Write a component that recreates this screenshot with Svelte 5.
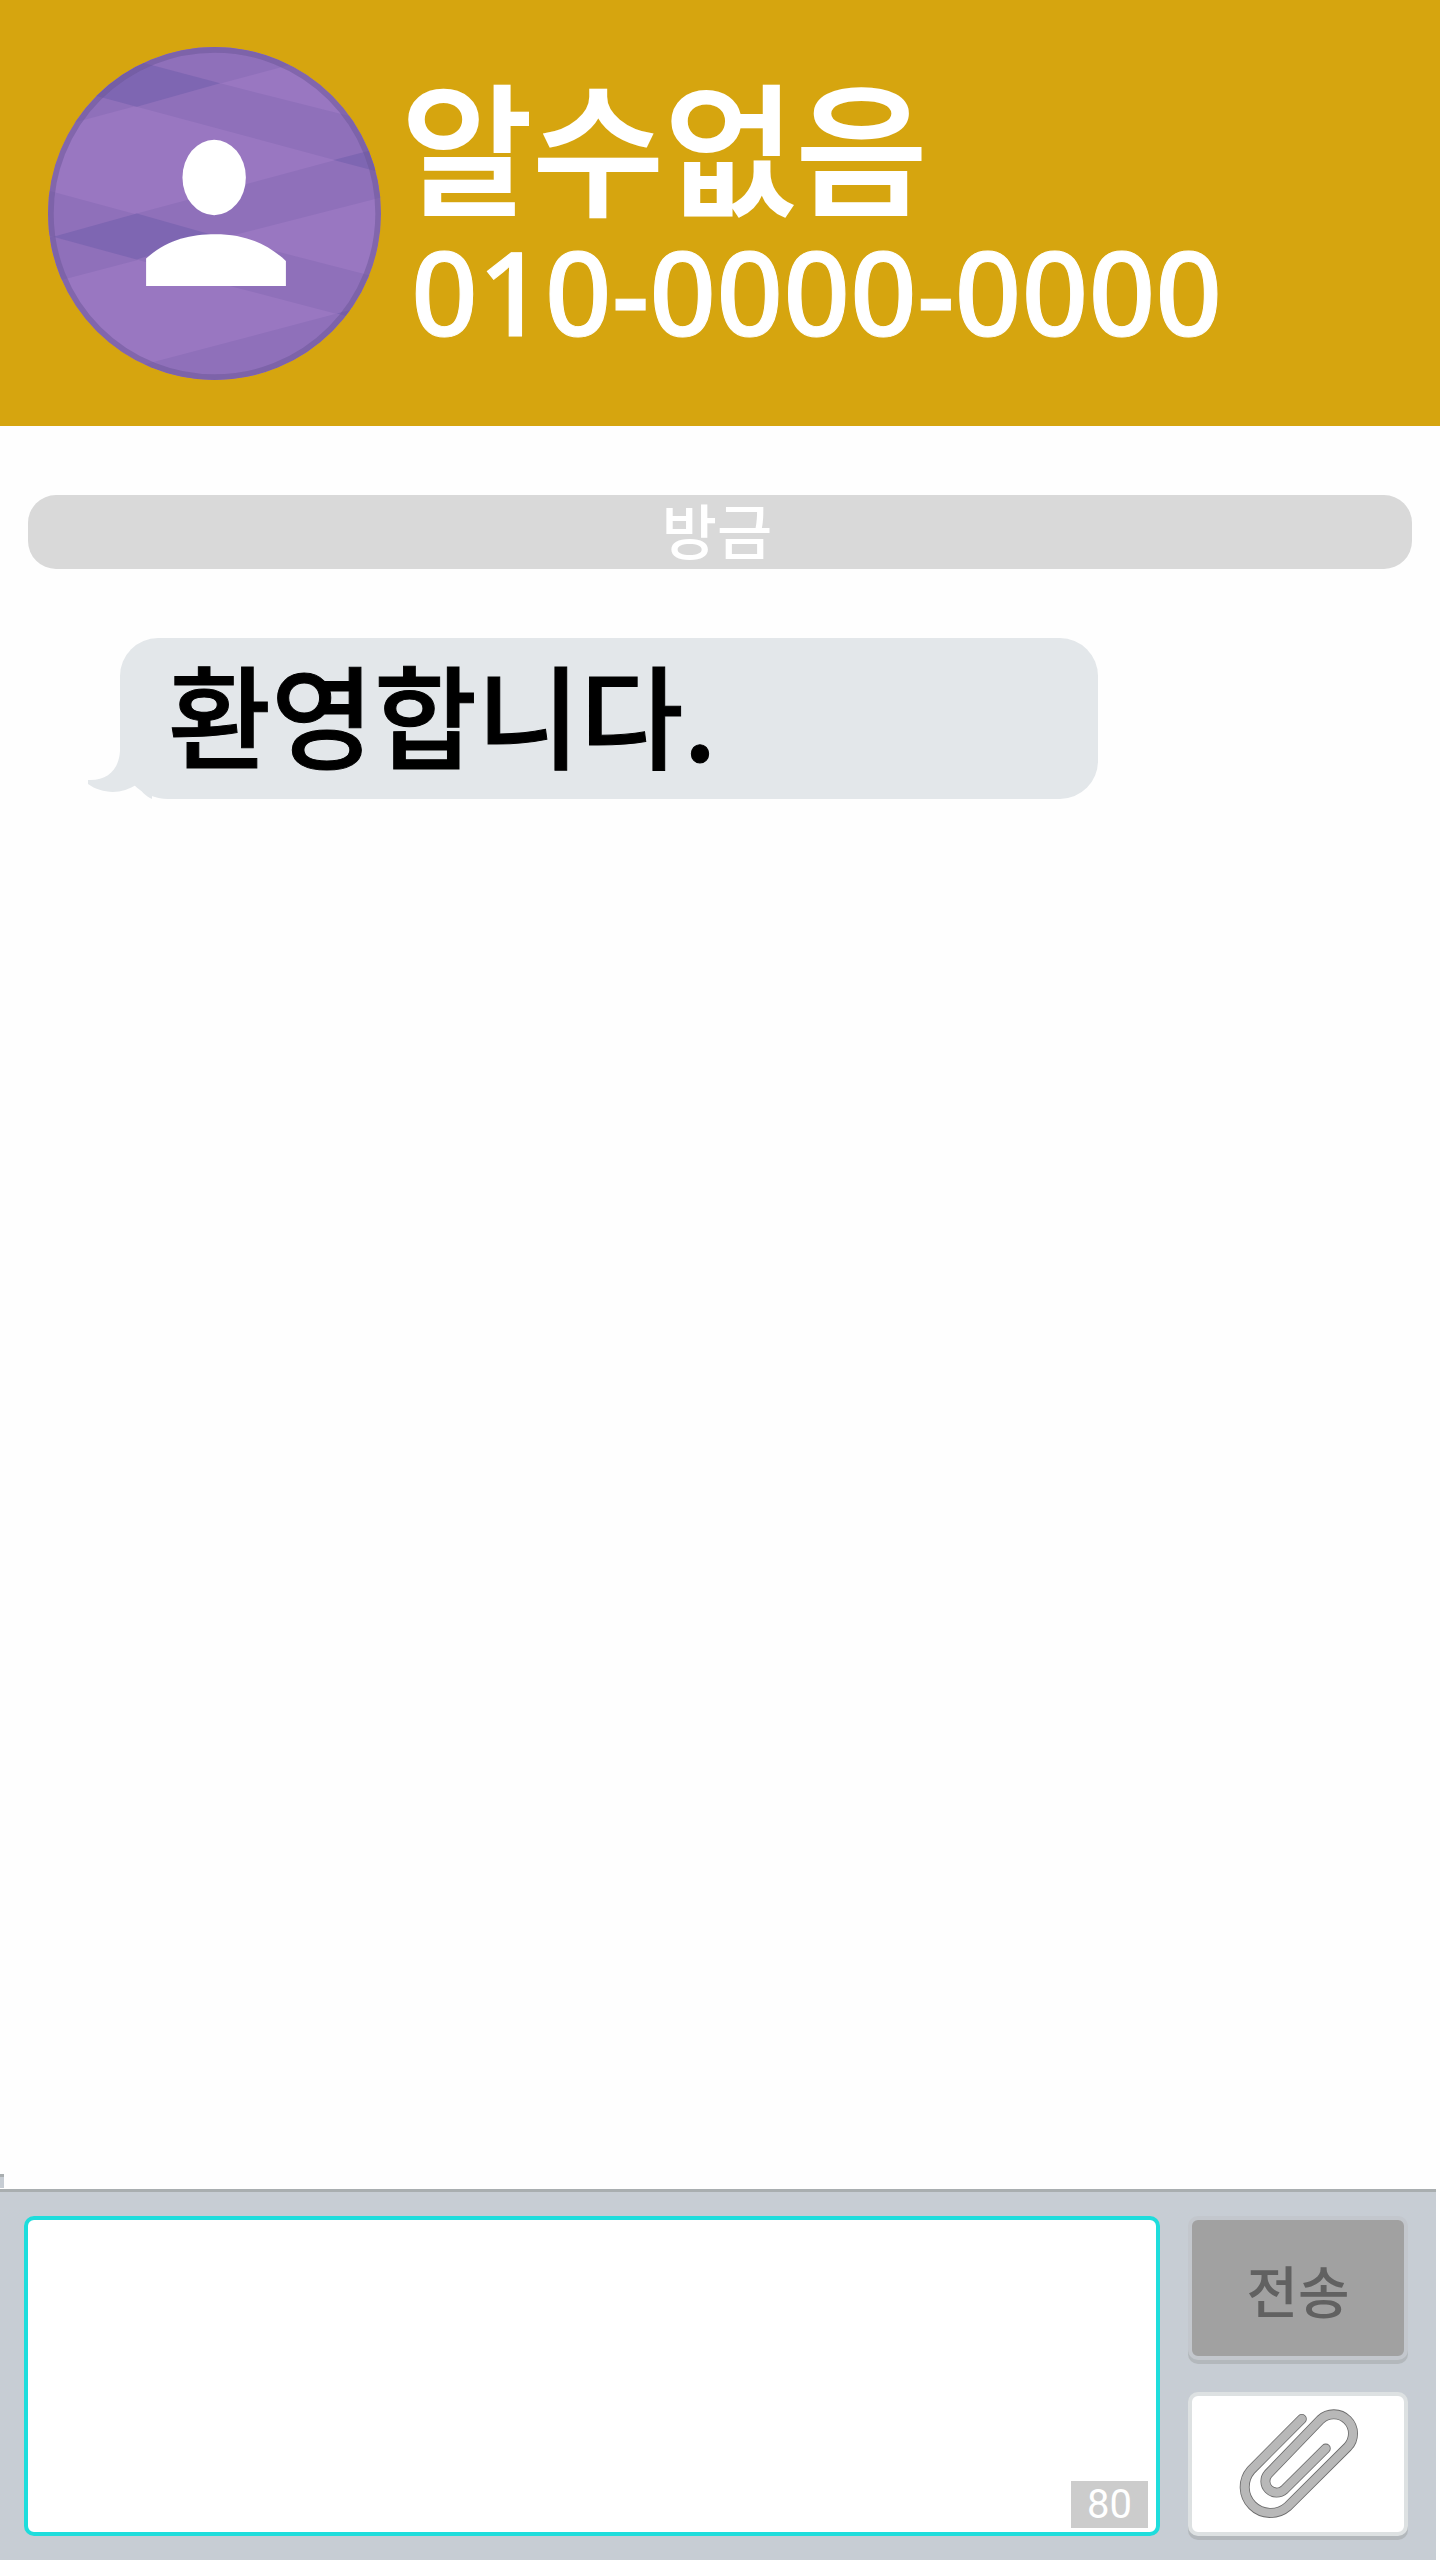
<script>
  let message = $state('');
  const limit = 80;
</script>

<main class="screen">
  <header class="contact">
    <svg class="avatar" viewBox="144 141 998 998" role="img" aria-label="프로필">
      <clipPath id="disc"><circle cx="643" cy="640" r="499" /></clipPath>
      <g clip-path="url(#disc)">
        <rect x="144" y="141" width="998" height="998" fill="#9977c1" />
        <g fill="#8f70ba">
          <path d="M144 388 L1142 122 L144 100Z" />
          <path d="M144 113 L660 250 L1142 372 V517 L410 320 L144 249Z" />
          <path d="M144 714 L410 640 L1142 443 V592 L720 700 L410 780 L144 850Z" />
          <path d="M144 571 L640 705 L1142 834 V976 L700 860 L410 778 L144 706Z" />
          <path d="M400 1101 L1010 940 L1142 905 V1139 H400Z" />
        </g>
        <g fill="#7e66b2">
          <path d="M144 113 L660 250 L410 320 L144 249Z" />
          <path d="M1000 480 L1142 443 V517Z" />
          <path d="M160 710 L410 640 L640 705 L410 778Z" />
          <path d="M1010 940 L1062 926 V953Z" />
        </g>
        <circle cx="643" cy="640" r="491" fill="none" stroke="#6b5597" stroke-opacity=".5" stroke-width="18" />
      </g>
      <ellipse cx="642" cy="532" rx="95" ry="113" fill="#fff" />
      <path d="M438 857 V775 C500 718 570 702 645 702 C735 702 800 730 857 782 V857Z" fill="#fff" />
    </svg>
    <div class="who">
      <h1>알수없음</h1>
      <p>010-0000-0000</p>
    </div>
  </header>

  <section class="thread">
    <div class="stamp">방금</div>
    <div class="bubble">
      <svg class="tail" viewBox="0 0 64 48" aria-hidden="true">
        <path d="M32 0 C31 18 20 30 0 29 V33 C14 43 34 44 49 33 C52 39 57 45 64 48 V0Z" />
      </svg>
      환영합니다.
    </div>
  </section>

  <form class="composer" onsubmit={(e) => e.preventDefault()}>
    <div class="field">
      <textarea aria-label="메시지" bind:value={message} maxlength={limit}></textarea>
      <span class="count">{limit - message.length}</span>
    </div>
    <div class="actions">
      <button class="send" type="submit">전송</button>
      <button class="attach" type="button" aria-label="파일 첨부">
        <svg viewBox="234 684 364 334" aria-hidden="true">
          <g fill="none" stroke-linecap="round" stroke-linejoin="round">
            <path stroke="#6c6c6c" stroke-width="30" d="M426 714 L273 868 A78 78 0 0 0 383 978 L564 798 A58 58 0 0 0 482 716 L325 879 A34 34 0 0 0 373 927 L498 803" />
            <path stroke="#b8b8b8" stroke-width="25" d="M426 714 L273 868 A78 78 0 0 0 383 978 L564 798 A58 58 0 0 0 482 716 L325 879 A34 34 0 0 0 373 927 L498 803" />
          </g>
        </svg>
      </button>
    </div>
  </form>
</main>

<style>
  :global(body) {
    margin: 0;
    background: #fefefe;
  }
  .screen {
    display: flex;
    flex-direction: column;
    min-height: 100vh;
    font-family: 'Noto Sans', 'Noto Sans CJK KR', sans-serif;
  }
  .contact {
    display: flex;
    align-items: center;
    gap: 20px;
    box-sizing: border-box;
    min-height: 426px;
    padding: 40px 48px;
    background: #d6a50f;
    color: #fff;
  }
  .avatar {
    flex: none;
    width: 333px;
    height: 333px;
  }
  h1,
  p {
    margin: 0;
    white-space: nowrap;
  }
  h1 {
    font-family: 'Noto Sans CJK KR', sans-serif;
    font-size: 143px;
    line-height: 156px;
    font-weight: 500;
    -webkit-text-stroke: 2px #fff;
  }
  p {
    padding-left: 10px;
    font-size: 117px;
    line-height: 140px;
    font-weight: 500;
    -webkit-text-stroke: 1px #fff;
  }
  .thread {
    flex: 1;
    padding: 69px 28px;
    font-family: 'Noto Sans CJK KR', sans-serif;
    font-weight: 500;
  }
  .stamp {
    padding: 0 6px 6px 0;
    border-radius: 28px;
    background: #d9d9d9;
    color: #fff;
    font-size: 60px;
    line-height: 68px;
    text-align: center;
  }
  .bubble {
    position: relative;
    box-sizing: border-box;
    width: 70.7%;
    margin: 69px 0 0 92px;
    padding: 0 48px 12px;
    border-radius: 38px 38px 38px 48px;
    background: #e3e7ea;
    color: #000;
    font-size: 112px;
    line-height: 149px;
    -webkit-text-stroke: 1px #000;
  }
  .tail {
    position: absolute;
    left: -32px;
    bottom: 0;
    width: 64px;
    height: 48px;
    fill: #e3e7ea;
  }
  .composer {
    position: relative;
    display: flex;
    gap: 28px;
    margin-right: 4px;
    padding: 24px 28px 24px 24px;
    border-top: 3px solid #a9aeb0;
    background: #c7cdd4;
  }
  .composer::before {
    content: '';
    position: absolute;
    left: 0;
    top: -18px;
    width: 4px;
    height: 11px;
    border-top: 3px solid #a9aeb0;
    background: #c7cdd4;
  }
  .field {
    position: relative;
    display: flex;
    flex: 1;
  }
  textarea {
    box-sizing: border-box;
    width: 100%;
    padding: 20px;
    border: 4px solid #1edddc;
    border-radius: 10px;
    outline: none;
    resize: none;
    background: #fff;
    font: 56px 'Noto Sans CJK KR', sans-serif;
  }
  .count {
    position: absolute;
    right: 12px;
    bottom: 8px;
    padding: 0 16px;
    background: #ccc;
    color: #fff;
    font: 40px/47px Roboto, sans-serif;
  }
  .actions {
    display: grid;
    gap: 32px;
  }
  button {
    display: flex;
    align-items: center;
    justify-content: center;
    box-sizing: border-box;
    width: 220px;
    height: 144px;
    padding: 0;
    border: 4px solid #dde1e2;
    border-radius: 10px;
    box-shadow: 0 4px 0 #b3b8bc;
    background: #fff;
  }
  .send {
    border-color: #c3c7cd;
    background: #a1a1a1;
    color: #616161;
    font: 500 56px 'Noto Sans CJK KR', sans-serif;
  }
  .attach svg {
    width: 121px;
    height: 111px;
  }
</style>
